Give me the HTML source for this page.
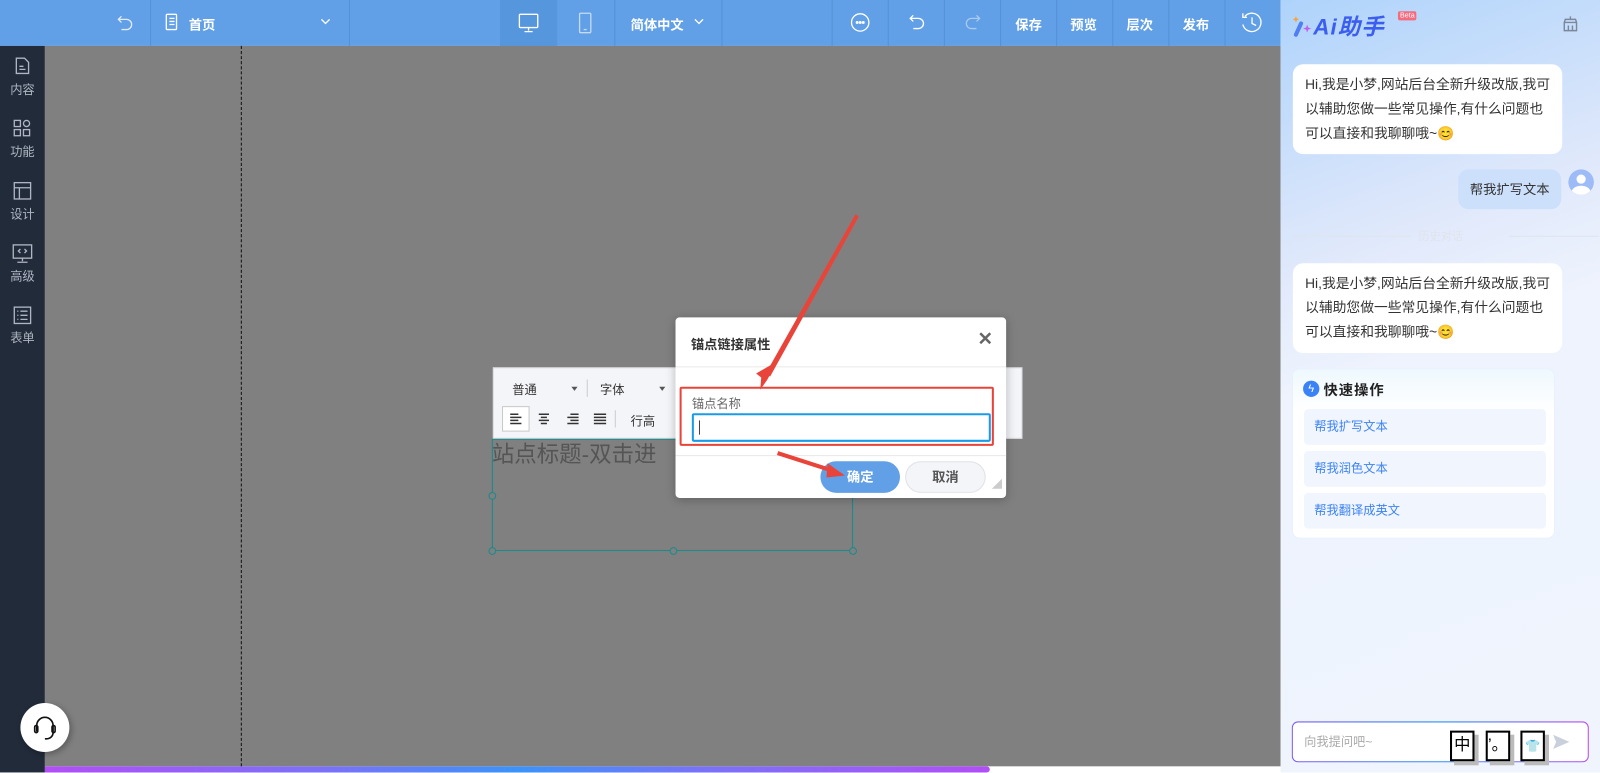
<!DOCTYPE html>
<html><head><meta charset="utf-8"><style>
*{margin:0;padding:0;box-sizing:border-box}
html,body{width:1600px;height:773px;overflow:hidden;background:#fff}
body{font-family:"Liberation Sans","Noto Sans CJK SC",sans-serif}
#w{position:absolute;left:0;top:0;width:1568px;height:757px;transform:scale(1.020408);transform-origin:0 0;overflow:hidden;background:#fff}
.a{position:absolute}
.hd{left:0;top:0;width:1255px;height:45px;background:#619fe6}
.dv{top:0;width:1px;height:45px;background:#5591d8}
.ht{color:#fff;font-size:13px;font-weight:bold;top:14px}
.sb{left:0;top:45px;width:44px;height:712px;background:#222b3a}
.si{width:44px;text-align:center;color:#aeb6c2;font-size:12px}
.cv{left:44px;top:45px;width:1211px;height:706px;background:#808080}
.rp{left:1255px;top:0;width:313px;height:757px;background:linear-gradient(160deg,#aed3fb 0%,#dfe8fb 30%,#eef3fd 45%,#eff4fd 100%)}
.bub{background:#fff;border-radius:10px;color:#333;font-size:13.5px;line-height:24px;padding:8px 12px}
.qi{left:11px;width:237px;height:35px;background:#f0f5fe;border-radius:4px;color:#3b82f6;font-size:12px;line-height:35px;padding-left:10px}
.ime{width:24px;height:30px;border:2px solid #000;background:#fff;box-shadow:4px 4px 0 #bbb;font-size:16px;text-align:center;line-height:26px}
</style></head><body><div id="w">
<div class="a hd"></div>
<div class="a" style="left:420px;top:0;width:1px;height:45px"></div>
<div class="a dv" style="left:147px"></div><div class="a dv" style="left:342px"></div>
<div class="a" style="left:490px;top:0;width:56px;height:45px;background:#5596dd"></div>
<div class="a dv" style="left:602px"></div><div class="a dv" style="left:707px"></div>
<div class="a dv" style="left:815px"></div><div class="a dv" style="left:870px"></div><div class="a dv" style="left:925px"></div><div class="a dv" style="left:980px"></div><div class="a dv" style="left:1035px"></div><div class="a dv" style="left:1090px"></div><div class="a dv" style="left:1145px"></div><div class="a dv" style="left:1200px"></div>
<svg class="a" style="left:0;top:0" width="1255" height="45" fill="none" stroke="#fff" stroke-width="1.3">
<path d="M119 16 l-3 3 3 3 M116 19 h8 a5 5 0 0 1 0 10 h-5" stroke="#e0ebfa"/>
<rect x="163" y="14" width="10" height="15" rx="1"/><path d="M166 18h5M166 21h5M166 24h5"/>
<path d="M315 19l4 4 4-4"/>
<rect x="509" y="14" width="18" height="13" rx="1"/><path d="M518 27v3M514 31h8"/>
<rect x="568" y="13" width="11" height="19" rx="1" stroke="#c5dbf5"/><path d="M572 29h3" stroke="#c5dbf5"/>
<path d="M681 19l4 4 4-4"/>
<circle cx="843" cy="22" r="8.5"/><circle cx="840" cy="22" r=".8" fill="#fff"/><circle cx="843" cy="22" r=".8" fill="#fff"/><circle cx="846" cy="22" r=".8" fill="#fff"/>
<path d="M895 15l-3 3 3 3M892 18h8a5 5 0 0 1 0 10h-5"/>
<path d="M957 15l3 3-3 3M960 18h-8a5 5 0 0 0 0 10h5" stroke="#a9c9ef"/>
<path d="M1220 16 a9 9 0 1 1 -2 8 M1218 13v4h4 M1227 17v6l4 2"/>
</svg>
<div class="a ht" style="left:185px">首页</div>
<div class="a ht" style="left:618px">简体中文</div>
<div class="a ht" style="left:995px">保存</div><div class="a ht" style="left:1049px">预览</div><div class="a ht" style="left:1104px">层次</div><div class="a ht" style="left:1159px">发布</div>
<div class="a sb"></div>
<svg class="a" style="left:0;top:45px" width="44" height="300" fill="none" stroke="#aeb6c2" stroke-width="1.3">
<path d="M16 12h8l4 4v11h-12z M19 20h4M19 23h6"/>
<rect x="14" y="73" width="6" height="6"/><rect x="23" y="73" width="6" height="6" rx="3"/><rect x="14" y="82" width="6" height="6"/><rect x="23" y="82" width="6" height="6"/>
<rect x="14" y="134" width="16" height="16"/><path d="M14 139h16M19 139v11"/>
<rect x="13" y="195" width="18" height="13"/><path d="M22 208v3M17 212h10M20 199l-2 2 2 2M24 199l2 2-2 2"/>
<rect x="14" y="256" width="16" height="16"/><path d="M17 260h1M20 260h7M17 264h1M20 264h7M17 268h1M20 268h7"/>
</svg>
<div class="a si" style="top:79px">内容</div><div class="a si" style="top:140px">功能</div><div class="a si" style="top:201px">设计</div><div class="a si" style="top:262px">高级</div><div class="a si" style="top:322px">表单</div>
<div class="a cv"></div>
<div class="a" style="left:236px;top:45px;height:706px;border-left:1px dashed #111"></div>
<div class="a" style="left:44px;top:751px;width:926px;height:6px;border-radius:0 3px 3px 0;background:linear-gradient(90deg,#b14ff5,#7a72f5 30%,#3d93f7 50%,#7a72f5 70%,#b14ff5)"></div>
<div class="a" style="left:20px;top:689px;width:48px;height:48px;border-radius:50%;background:#fff;box-shadow:2px 2px 6px rgba(0,0,0,.3)"></div>
<svg class="a" style="left:20px;top:689px" width="48" height="48" fill="none" stroke="#111" stroke-width="1.6"><path d="M16 28v-6a8 8 0 0 1 16 0v6M16 22v6M32 22v7a6 6 0 0 1-6 6h-2"/><rect x="14" y="22" width="3" height="7" rx="1.5"/><rect x="31" y="22" width="3" height="7" rx="1.5"/></svg>
<!-- toolbar -->
<div class="a" style="left:483px;top:360px;width:519px;height:70px;background:#f4f5f8;border:1px solid #dcdde0"></div>
<div class="a" style="left:502px;top:373px;font-size:12px;color:#333">普通</div>
<div class="a" style="left:560px;top:379px;border:3px solid transparent;border-top:4px solid #555"></div>
<div class="a" style="left:575px;top:372px;width:1px;height:17px;background:#ccc"></div>
<div class="a" style="left:588px;top:373px;font-size:12px;color:#333">字体</div>
<div class="a" style="left:646px;top:379px;border:3px solid transparent;border-top:4px solid #555"></div>
<div class="a" style="left:492px;top:398px;width:27px;height:25px;border:1px solid #c8c8c8;background:#fff"></div>
<svg class="a" style="left:492px;top:398px" width="120" height="25" stroke="#333" stroke-width="1.5"><path d="M8 8h8M8 11h11M8 14h8M8 17h11 M36 8h10M38 11h6M36 14h10M38 17h6 M67 8h8M64 11h11M67 14h8M64 17h11 M90 8h12M90 11h12M90 14h12M90 17h12"/><path d="M111 4v17" stroke="#ccc" stroke-width="1"/></svg>
<div class="a" style="left:618px;top:404px;font-size:12px;color:#333">行高</div>
<div class="a" style="left:482px;top:428px;font-size:22px;color:#555;white-space:nowrap">站点标题-双击进</div>
<div class="a" style="left:482px;top:430px;width:354px;height:110px;border:1px solid #1a8a8a"></div>
<svg class="a" style="left:476px;top:424px" width="368" height="124" fill="#808080" stroke="#1a8a8a"><circle cx="6.5" cy="62" r="3.3"/><circle cx="6.5" cy="116" r="3.3"/><circle cx="184" cy="116" r="3.3"/><circle cx="360" cy="116" r="3.3"/></svg>
<!-- dialog -->
<div class="a" style="left:662px;top:311px;width:324px;height:177px;background:#fff;border-radius:4px;box-shadow:0 2px 10px rgba(0,0,0,.25)"></div>
<div class="a" style="left:677px;top:327px;font-size:13px;font-weight:bold;color:#333">锚点链接属性</div>
<div class="a" style="left:958px;top:322px;font-size:18px;color:#666;font-weight:bold">✕</div>
<div class="a" style="left:662px;top:359px;width:324px;height:1px;background:#e8e8e8"></div>
<div class="a" style="left:662px;top:446px;width:324px;height:1px;background:#e8e8e8"></div>
<div class="a" style="left:666px;top:379px;width:308px;height:58px;border:2px solid #e8443a;border-radius:2px"></div>
<div class="a" style="left:678px;top:387px;font-size:12px;color:#666">锚点名称</div>
<div class="a" style="left:678px;top:405px;width:293px;height:28px;border:2px solid #1a9be8;border-radius:2px"></div>
<div class="a" style="left:685px;top:412px;width:1px;height:14px;background:#444"></div>
<div class="a" style="left:804px;top:452px;width:78px;height:31px;border-radius:16px;background:#619fe6;color:#fff;font-size:13px;font-weight:bold;text-align:center;line-height:31px">确定</div>
<div class="a" style="left:887px;top:452px;width:79px;height:31px;border-radius:16px;background:#f4f5f8;border:1px solid #e0e2e6;color:#555;font-size:13px;font-weight:bold;text-align:center;line-height:29px">取消</div>
<div class="a" style="left:972px;top:469px;border-left:10px solid transparent;border-bottom:10px solid #ccc"></div>
<svg class="a" style="left:0;top:0" width="1255" height="757"><path d="M838 211 L752 372 L745 382 L746 370 L741 366 L755 358 Z" fill="#e8443a"/><path d="M840 211 L753 368" stroke="#e8443a" stroke-width="4"/><path d="M762 444 L815 461" stroke="#e8443a" stroke-width="4"/><path d="M828 466 L811 454 L810 468 Z" fill="#e8443a"/></svg>
<!-- right panel -->
<div class="a rp"></div>
<svg class="a" style="left:1265px;top:10px" width="120" height="30"><path d="M5 24 L10 13" stroke="#4f7ff0" stroke-width="4" stroke-linecap="round"/><path d="M5 6l1 2 2 1-2 1-1 2-1-2-2-1 2-1z" fill="#f7a23c"/><path d="M16 14l1 3 3 1-3 1-1 3-1-3-3-1 3-1z" fill="#c35cf0"/></svg>
<div class="a" style="left:1287px;top:9px;font-size:22px;font-weight:bold;font-style:italic;color:#3c5ef0;letter-spacing:1px">Ai助手</div>
<div class="a" style="left:1370px;top:11px;background:#f56a7d;color:#fff;font-size:7px;padding:1px 2px;border-radius:2px">Beta</div>
<svg class="a" style="left:1530px;top:14px" width="18" height="18" fill="none" stroke="#7b879b" stroke-width="1.4"><path d="M5 5h8M9 2v3M3 8h12v8H3zM3 8l1-3h10l1 3M7 11v5M11 11v5"/></svg>
<div class="a bub" style="left:1267px;top:63px;width:264px">Hi,我是小梦,网站后台全新升级改版,我可以辅助您做一些常见操作,有什么问题也可以直接和我聊聊哦~😊</div>
<div class="a" style="left:1429px;top:166px;width:101px;height:39px;border-radius:10px;background:#cde0fb;color:#333;font-size:13px;text-align:center;line-height:39px">帮我扩写文本</div>
<div class="a" style="left:1537px;top:166px;width:25px;height:25px;border-radius:50%;background:#9dbcf7;overflow:hidden"><div class="a" style="left:8px;top:5px;width:9px;height:9px;border-radius:50%;background:#fff"></div><div class="a" style="left:3px;top:16px;width:19px;height:14px;border-radius:50%;background:#fff"></div></div>
<div class="a" style="left:1266px;top:231px;width:116px;height:1px;background:#dfe4ec"></div>
<div class="a" style="left:1479px;top:231px;width:88px;height:1px;background:#dfe4ec"></div>
<div class="a" style="left:1390px;top:223px;font-size:11px;color:#dfe4ec">历史对话</div>
<div class="a bub" style="left:1267px;top:258px;width:264px">Hi,我是小梦,网站后台全新升级改版,我可以辅助您做一些常见操作,有什么问题也可以直接和我聊聊哦~😊</div>
<div class="a" style="left:1266px;top:361px;width:258px;height:167px;background:linear-gradient(#eef8fe,#fff 25%);border-radius:8px;border:1px solid #e8f2fc">
<div class="a" style="left:10px;top:11px;width:16px;height:16px;border-radius:50%;background:#3b82f6;color:#fff;font-size:11px;text-align:center;line-height:16px">ϟ</div>
<div class="a" style="left:30px;top:10px;font-size:14px;font-weight:bold;color:#222;letter-spacing:1px">快速操作</div>
<div class="a qi" style="top:39px">帮我扩写文本</div>
<div class="a qi" style="top:80px">帮我润色文本</div>
<div class="a qi" style="top:121px">帮我翻译成英文</div>
</div>
<div class="a" style="left:1266px;top:707px;width:291px;height:40px;border-radius:6px;padding:1px;background:linear-gradient(90deg,#7b5cf0,#2f8ff5 50%,#b44cf0)"><div style="width:100%;height:100%;background:#fff;border-radius:5px"></div></div>
<div class="a" style="left:1278px;top:718px;font-size:12px;color:#aaa">向我提问吧~</div>
<div class="a ime" style="left:1421px;top:716px">中</div>
<div class="a ime" style="left:1456px;top:716px">’。</div>
<div class="a ime" style="left:1490px;top:716px;font-size:12px">👕</div>
<svg class="a" style="left:1521px;top:719px" width="18" height="16"><path d="M1 1l16 7-16 7 3-7z" fill="#c9d0dc"/></svg>
</div></body></html>
